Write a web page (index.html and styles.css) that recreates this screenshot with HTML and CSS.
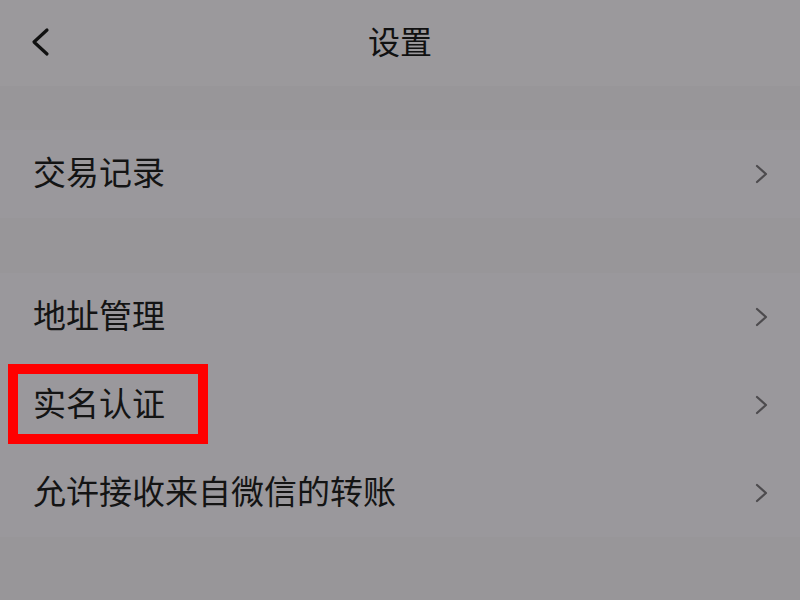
FILE: index.html
```html
<!DOCTYPE html>
<html lang="zh-CN">
<head>
    <meta charset="UTF-8">
    <title>设置</title>
    <link rel="stylesheet" href="styles.css">
</head>
<body>
    <div class="page">
        <div class="header">
            <svg class="back" width="24" height="32" viewBox="0 0 24 32">
                <polyline points="17,3 4,15 17,27" fill="none" stroke="#111" stroke-width="3.2" stroke-linecap="round" stroke-linejoin="round"/>
            </svg>
            <div class="title">设置</div>
        </div>

        <div class="gap gap-top"></div>
        <div class="row">
            <span class="label">交易记录</span>
            <svg class="arrow" width="14" height="20" viewBox="0 0 14 20"><polyline points="2,2 11,10 2,18" fill="none" stroke="#4d4b4e" stroke-width="2.2" stroke-linecap="round" stroke-linejoin="round"/></svg>
        </div>

        <div class="gap gap-mid"></div>
        <div class="row">
            <span class="label">地址管理</span>
            <svg class="arrow" width="14" height="20" viewBox="0 0 14 20"><polyline points="2,2 11,10 2,18" fill="none" stroke="#4d4b4e" stroke-width="2.2" stroke-linecap="round" stroke-linejoin="round"/></svg>
        </div>
        <div class="row">
            <span class="label">实名认证</span>
            <svg class="arrow" width="14" height="20" viewBox="0 0 14 20"><polyline points="2,2 11,10 2,18" fill="none" stroke="#4d4b4e" stroke-width="2.2" stroke-linecap="round" stroke-linejoin="round"/></svg>
            <div class="highlight"></div>
        </div>
        <div class="row">
            <span class="label">允许接收来自微信的转账</span>
            <svg class="arrow" width="14" height="20" viewBox="0 0 14 20"><polyline points="2,2 11,10 2,18" fill="none" stroke="#4d4b4e" stroke-width="2.2" stroke-linecap="round" stroke-linejoin="round"/></svg>
        </div>
        <div class="gap gap-bottom"></div>
    </div>
</body>
</html>
```

FILE: styles.css
```css
body {
    margin: 0;
    font-family: "Noto Sans CJK SC", "Noto Sans", sans-serif;
    background: #9a989b;
}
.page {
    width: 800px;
    height: 600px;
    display: flex;
    flex-direction: column;
    overflow: hidden;
}
.header {
    height: 86px;
    flex: none;
    display: flex;
    align-items: center;
    justify-content: center;
    position: relative;
    background: #9b999c;
}
.back {
    position: absolute;
    left: 30px;
    top: 27px;
}
.title {
    font-size: 32px;
    color: #111;
    line-height: 1;
    padding-bottom: 6px;
}
.gap { flex: none; background: #989699; }
.gap-top { height: 44px; }
.gap-mid { height: 55px; }
.gap-bottom { flex: 1; }
.row {
    height: 88px;
    flex: none;
    display: flex;
    align-items: center;
    justify-content: space-between;
    padding: 0 31px 0 33px;
    position: relative;
    background: #9a989c;
}
.label {
    font-size: 33px;
    color: #141414;
    line-height: 1;
    padding-bottom: 6px;
}
.arrow { display: block; }
.highlight {
    position: absolute;
    left: 8px;
    top: 3px;
    width: 200px;
    height: 80px;
    box-sizing: border-box;
    border: 10px solid #ff0000;
}
```
